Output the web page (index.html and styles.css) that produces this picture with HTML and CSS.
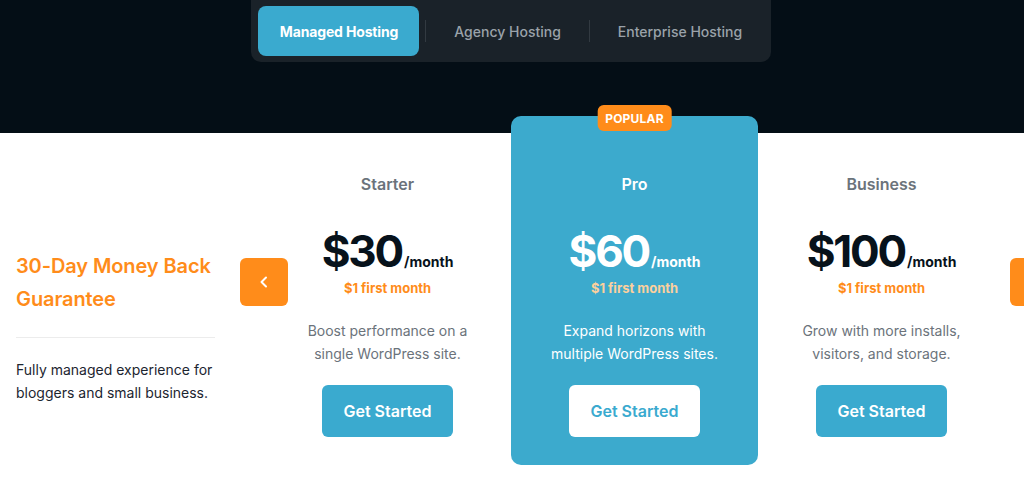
FILE: index.html
```html
<!DOCTYPE html>
<html lang="en">
<head>
<meta charset="utf-8">
<title>Pricing</title>
<link rel="stylesheet" href="styles.css">
</head>
<body>
<header class="hero">
  <nav class="tabs">
    <span class="tab active">Managed Hosting</span>
    <span class="sep"></span>
    <span class="tab">Agency Hosting</span>
    <span class="sep"></span>
    <span class="tab">Enterprise Hosting</span>
  </nav>
</header>
<main class="pricing">
  <section class="intro">
    <h2 class="intro-title">30-Day Money Back Guarantee</h2>
    <hr class="divider">
    <p class="intro-text">Fully managed experience for bloggers and small business.</p>
  </section>
  <section class="carousel">
    <button class="arrow arrow-left" aria-label="Previous">
      <svg width="16" height="16" viewBox="0 0 16 16"><path d="M10 3.5 L5.5 8 L10 12.5" fill="none" stroke="#fff" stroke-width="2" stroke-linecap="round" stroke-linejoin="round"/></svg>
    </button>
    <div class="track">
      <article class="card">
        <h3 class="plan">Starter</h3>
        <div class="price"><span class="amount">$30</span><span class="per">/month</span></div>
        <div class="first">$1 first month</div>
        <p class="desc">Boost performance on a<br>single WordPress site.</p>
        <a class="btn">Get Started</a>
      </article>
      <article class="card featured">
        <span class="badge">POPULAR</span>
        <h3 class="plan">Pro</h3>
        <div class="price"><span class="amount">$60</span><span class="per">/month</span></div>
        <div class="first">$1 first month</div>
        <p class="desc">Expand horizons with<br>multiple WordPress sites.</p>
        <a class="btn">Get Started</a>
      </article>
      <article class="card">
        <h3 class="plan">Business</h3>
        <div class="price"><span class="amount">$100</span><span class="per">/month</span></div>
        <div class="first">$1 first month</div>
        <p class="desc">Grow with more installs,<br>visitors, and storage.</p>
        <a class="btn">Get Started</a>
      </article>
    </div>
    <button class="arrow arrow-right" aria-label="Next">
      <svg width="16" height="16" viewBox="0 0 16 16"><path d="M6 3.5 L10.5 8 L6 12.5" fill="none" stroke="#fff" stroke-width="2" stroke-linecap="round" stroke-linejoin="round"/></svg>
    </button>
  </section>
</main>
</body>
</html>
```

FILE: styles.css
```css
* { box-sizing: border-box; }

html, body {
  margin: 0;
  padding: 0;
}

body {
  width: 1024px;
  height: 504px;
  overflow: hidden;
  background: #ffffff;
  font-family: Inter, "Noto Sans", sans-serif;
}

.hero {
  background: #040e16;
  height: 133px;
  display: flex;
  justify-content: center;
}

.tabs {
  display: flex;
  align-items: center;
  gap: 6px;
  height: 62px;
  padding: 6px 7px;
  background: #1a2229;
  border-radius: 0 0 10px 10px;
  margin-left: -2px;
}

.tab {
  display: flex;
  align-items: center;
  height: 50px;
  padding: 0 22px;
  font-size: 14px;
  font-weight: 500;
  color: #9aa2aa;
  border-radius: 8px;
  white-space: nowrap;
}

.tab.active {
  background: #3aaacf;
  color: #ffffff;
  font-weight: 700;
  padding: 0 21px 0 22px;
  letter-spacing: -0.15px;
}

.sep {
  width: 1px;
  height: 22px;
  background: #323a41;
}

.pricing {
  display: flex;
  height: 371px;
}

.intro {
  width: 199px;
  margin-left: 16px;
  padding-top: 117px;
  flex-shrink: 0;
}

.intro-title {
  margin: 0;
  font-size: 20px;
  line-height: 33px;
  font-weight: 600;
  color: #ff8c1a;
  letter-spacing: -0.1px;
}

.divider {
  margin: 21px 0 0;
  border: 0;
  border-top: 1px solid #ececec;
}

.intro-text {
  margin: 20px 0 0;
  font-size: 14px;
  line-height: 23px;
  color: #1c2530;
}

.carousel {
  position: relative;
  margin-left: 25px;
  flex: 1;
}

.arrow {
  position: absolute;
  top: 125px;
  width: 48px;
  height: 48px;
  border: 0;
  padding: 0;
  border-radius: 6px;
  background: #ff8c1a;
  display: flex;
  align-items: center;
  justify-content: center;
  z-index: 2;
}

.arrow-left { left: 0; }
.arrow-right { left: 770px; }

.track {
  display: flex;
  margin-left: 24px;
  margin-top: -17px;
}

.card {
  position: relative;
  width: 247px;
  height: 349px;
  padding: 56px 0 28px;
  display: flex;
  flex-direction: column;
  align-items: center;
  text-align: center;
  border-radius: 10px;
}

.card.featured {
  background: #3caacd;
}

.badge {
  position: absolute;
  top: -11px;
  left: 50%;
  transform: translateX(-50%);
  height: 26px;
  padding: 0 8px;
  display: flex;
  align-items: center;
  background: #ff8c1a;
  color: #ffffff;
  font-size: 12px;
  font-weight: 700;
  letter-spacing: 0.2px;
  border-radius: 6px;
}

.plan {
  margin: 0;
  font-size: 16px;
  line-height: 24px;
  font-weight: 600;
  color: #6b737b;
}

.price {
  margin-top: 31px;
  display: flex;
  align-items: baseline;
  height: 49px;
  color: #07121b;
}

.amount {
  font-size: 44px;
  line-height: 49px;
  font-weight: 700;
  letter-spacing: -2.2px;
}

.per {
  font-size: 14px;
  font-weight: 700;
  margin-left: 2px;
}

.first {
  margin-top: 2px;
  font-size: 13px;
  line-height: 20px;
  font-weight: 700;
  color: #ff8c1a;
}

.desc {
  margin: 21px 0 0;
  font-size: 14px;
  line-height: 23px;
  color: #6b737b;
}

.btn {
  margin-top: 20px;
  height: 52px;
  padding: 0 21px;
  display: flex;
  align-items: center;
  justify-content: center;
  background: #3aaacf;
  color: #ffffff;
  font-size: 16px;
  font-weight: 600;
  border-radius: 6px;
  cursor: pointer;
}

.featured .plan,
.featured .price,
.featured .desc {
  color: #ffffff;
}

.featured .first {
  color: #fcd09d;
}

.featured .btn {
  background: #ffffff;
  color: #3aaacf;
}
```
